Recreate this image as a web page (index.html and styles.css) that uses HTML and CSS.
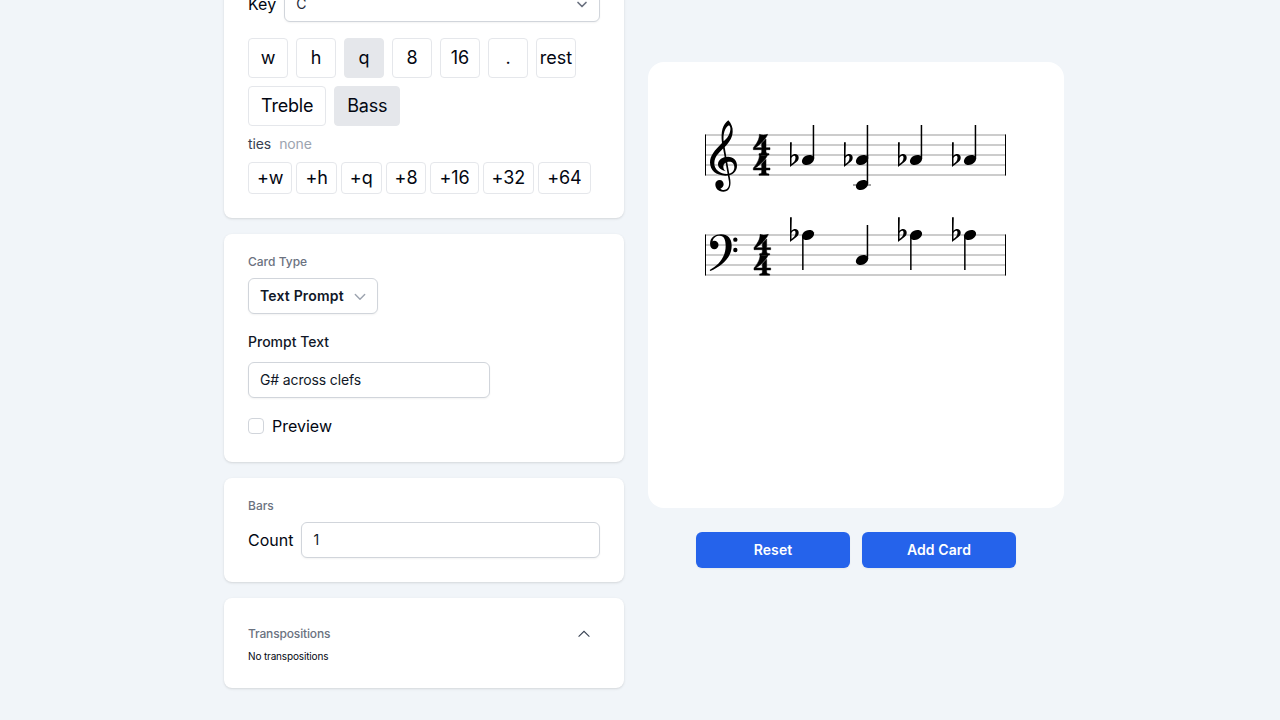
FILE: index.html
```html
<!DOCTYPE html>
<html lang="en">
<head>
<meta charset="utf-8">
<title>Card editor</title>
<link rel="stylesheet" href="styles.css">
</head>
<body>
<main class="page">
  <section class="settings">
    <div class="card notes">
      <div class="field-row"><span>Key</span>
        <div class="select key-select"><span>C</span>
          <svg class="chev dark" viewBox="0 0 20 20"><path d="M6 8.500l4 4 4-4"/></svg>
        </div>
      </div>
      <div class="buttons durations">
        <button class="sq">w</button><button class="sq">h</button><button class="sq on">q</button><button class="sq">8</button><button class="sq">16</button><button class="sq">.</button><button class="sq">rest</button>
      </div>
      <div class="buttons clefs"><button class="wide">Treble</button><button class="wide on">Bass</button></div>
      <div class="ties"><span>ties</span><span class="none">none</span></div>
      <div class="buttons add"><button>+w</button><button>+h</button><button>+q</button><button>+8</button><button>+16</button><button>+32</button><button>+64</button></div>
    </div>

    <div class="card">
      <div class="caption">Card Type</div>
      <div class="select type-select"><span>Text Prompt</span>
        <svg class="chev" viewBox="0 0 20 20"><path d="M5.300 8.500L10 13.200l4.700-4.700"/></svg>
      </div>
      <label class="prompt-label" for="prompt">Prompt Text</label>
      <input class="input prompt" id="prompt" type="text" value="G# across clefs">
      <label class="preview"><span class="box"></span>Preview</label>
    </div>

    <div class="card">
      <div class="caption">Bars</div>
      <div class="field-row"><span>Count</span><input class="input" type="text" value="1"></div>
    </div>

    <div class="card transpositions">
      <div class="trans-head"><span>Transpositions</span>
        <svg viewBox="0 0 12 8"><path d="M.6 6.700L6 1.300l5.400 5.400"/></svg>
      </div>
      <div class="empty">No transpositions</div>
    </div>
  </section>

  <section class="preview-col">
    <div class="sheet">
      <svg class="score" viewBox="648 62 416 446">
        <defs>
          <g id="staff">
            <path class="line" d="M705 0H1006M705 10H1006M705 20H1006M705 30H1006M705 40H1006"/>
            <path d="M705-.5h1v41h-1zM1005-.5h1v41h-1z"/>
          </g>
          <path id="four" class="numeral" d="M178 58C185 61 194 61 203 58C197 74 180 88 166 98H185V85L198 72V98H210V104H198V110C198 114 201 115 207 116V120H177V116C183 115 185 114 185 110V104H160V98C170 86 179 72 178 58Z"/>
          <path id="flat" fill-rule="evenodd" d="M-1-17.700H.8L.5-4.300C3-7 7.700-6.300 7.700-2.300C7.700 1.700 3 3.500-1 7ZM.5-2C2-5 4.500-4.700 4.500-2.300C4.500.5 2.600 2.600.5 4Z"/>
          <ellipse id="head" rx="6.400" ry="4.700" transform="rotate(-25)"/>
          <g id="up"><use href="#head"/><path d="M4.700-35H6.200V-1H4.700z"/></g>
          <g id="down"><use href="#head"/><path d="M-5.900 1H-4.400V35H-5.900z"/></g>
        </defs>
        <use href="#staff" y="135"/>
        <use href="#staff" y="235"/>
        <g transform="translate(700 115) scale(.33333)">
          <path fill-rule="evenodd" d="M66 84C62 50 68 28 85 16C94 26 99 38 98 50C97 72 84 86 70 100C54 116 44 126 43 144C42 164 62 177 80 177C96 177 103 168 103 157C103 146 97 140 88 140C76 140 70 147 70 155C70 162 73 165 78 169C64 166 54 159 54 148C54 134 68 125 84 125C100 125 111 136 111 152C111 170 97 182 76 182C48 182 30 166 30 142C30 122 44 106 66 84ZM71 79C69 58 74 38 87 31C93 36 92 46 89 54C85 65 79 72 71 79Z"/>
          <path d="M66 82L71 79L91 195C94 220 84 230 70 230C54 230 46 220 46 208C46 200 52 195 59 195C66 195 71 201 71 208C71 214 66 219 61 221C70 229 90 225 87 200Z"/>
          <use href="#four"/>
          <use href="#four" y="61"/>
        </g>
        <g transform="translate(700 210) scale(.33333)">
          <path d="M31 105C27 84 44 73 63 73C84 73 95 86 95 107C95 145 62 170 31 183L29 180C55 166 77 142 77 108C77 88 72 77 59 77C48 77 40 83 38 93Z"/>
          <circle cx="43" cy="105" r="12.500"/><circle cx="106" cy="89" r="6.500"/><circle cx="106" cy="120" r="6.500"/>
          <use href="#four" x="2" y="15"/>
          <use href="#four" x="2" y="76"/>
        </g>
        <path class="ledger" d="M853 185H871"/>
        <use href="#flat" x="791" y="160"/><use href="#up" x="808" y="160"/>
        <use href="#flat" x="845" y="160"/><use href="#up" x="862" y="160"/><use href="#head" x="0" y="0" transform="translate(862 185)"/>
        <path d="M866.700 155H868.200V184H866.700z"/>
        <use href="#flat" x="899" y="160"/><use href="#up" x="916" y="160"/>
        <use href="#flat" x="953" y="160"/><use href="#up" x="970" y="160"/>
        <use href="#flat" x="791" y="235"/><use href="#down" x="808" y="235"/>
        <use href="#up" x="862" y="260"/>
        <use href="#flat" x="899" y="235"/><use href="#down" x="916" y="235"/>
        <use href="#flat" x="953" y="235"/><use href="#down" x="970" y="235"/>
      </svg>
    </div>
    <div class="actions"><button>Reset</button><button>Add Card</button></div>
  </section>
</main>
</body>
</html>
```
FILE: styles.css
```css
* { box-sizing: border-box; }
html, body { height: 100%; }
body {
  margin: 0;
  overflow: hidden;
  background: #f1f5f9;
  color: #030712;
  font: 16px/24px Inter, sans-serif;
}
button, input { font: inherit; color: inherit; margin: 0; }
.page {
  display: grid;
  grid-template-columns: 400px 416px;
  gap: 24px;
  width: 840px;
  margin-left: 224px;
  align-items: start;
}
.settings { display: flex; flex-direction: column; gap: 16px; margin-top: -38px; }
.card {
  background: #fff;
  border-radius: 8px;
  padding: 20px 24px 24px;
  box-shadow: 0 1px 3px rgba(0,0,0,.1), 0 1px 2px -1px rgba(0,0,0,.1);
}
.card.notes { padding-top: 24px; }
.field-row { display: flex; align-items: center; gap: 8px; }
.select, .input {
  height: 36px;
  border: 1px solid #d1d5db;
  border-radius: 6px;
  background: #fff;
  box-shadow: 0 1px 2px rgba(0,0,0,.05);
  font-size: 14px;
  line-height: 20px;
  padding: 0 11px;
}
.select { display: flex; align-items: center; justify-content: space-between; }
.input { flex: 1; min-width: 0; padding-bottom: 2px; color: #111827; outline: 0; letter-spacing: -.14px; }
.key-select { flex: 1; padding-right: 7px; color: #1f2937; }
.chev { width: 20px; height: 20px; fill: none; stroke: #9ca3af; stroke-width: 1.4; stroke-linecap: round; stroke-linejoin: round; }
.chev.dark { stroke: #6b7280; stroke-width: 1.7; }
.buttons { display: flex; gap: 8px; }
.buttons button {
  height: 40px;
  border: 1px solid #e5e7eb;
  border-radius: 4px;
  background: #fff;
  padding: 0;
  font-size: 18px;
  line-height: 28px;
  white-space: nowrap;
}
.buttons .sq { width: 40px; }
.buttons .wide { padding: 0 12px; letter-spacing: -.2px; }
.buttons .on { background: #e5e7eb; }
.durations { margin-top: 16px; }
.clefs { margin-top: 8px; }
.ties { display: flex; gap: 8px; margin: 8px 0; font-size: 14px; line-height: 20px; letter-spacing: -.1px; color: #374151; }
.ties .none { color: #9ca3af; }
.buttons.add { gap: 4px; }
.buttons.add button { height: 32px; padding: 0 8px; letter-spacing: -.09px; }
.caption { font-size: 12px; line-height: 16px; font-weight: 500; color: #6b7280; margin-bottom: 8px; }
.type-select { width: 130px; padding-right: 7px; font-weight: 600; letter-spacing: .17px; color: #111827; }
.prompt-label { display: block; margin: 18px 0 10px; font-size: 14px; line-height: 20px; font-weight: 500; color: #111827; }
.prompt { display: block; width: 242px; }
.preview { display: flex; align-items: center; gap: 8px; margin-top: 16px; }
.box { width: 16px; height: 16px; border: 1px solid #d1d5db; border-radius: 4px; }
.transpositions { padding-top: 26px; height: 90px; }
.trans-head { display: flex; align-items: center; justify-content: space-between; height: 20px; padding-right: 10px; font-size: 12px; font-weight: 500; letter-spacing: -.15px; color: #6b7280; }
.trans-head svg { width: 12px; height: 8px; fill: none; stroke: #374151; stroke-width: 1.1; }
.empty { margin-top: 4px; font-size: 10px; line-height: 16px; letter-spacing: -.15px; }
.preview-col { padding-top: 62px; }
.sheet { height: 446px; border-radius: 16px; background: #fff; }
.score { display: block; width: 416px; height: 446px; }
.numeral { stroke: #000; stroke-width: 1.5; }
.line, .ledger { fill: none; stroke: #999; stroke-width: 1; }
.ledger { stroke: #444; }
.actions { display: grid; grid-template-columns: 1fr 1fr; gap: 12px; padding: 24px 48px; }
.actions button {
  height: 36px;
  border: 0;
  border-radius: 6px;
  background: #2563eb;
  color: #fff;
  font-size: 14px;
  font-weight: 600;
  letter-spacing: .1px;
  box-shadow: 0 1px 2px rgba(0,0,0,.05);
}
```
